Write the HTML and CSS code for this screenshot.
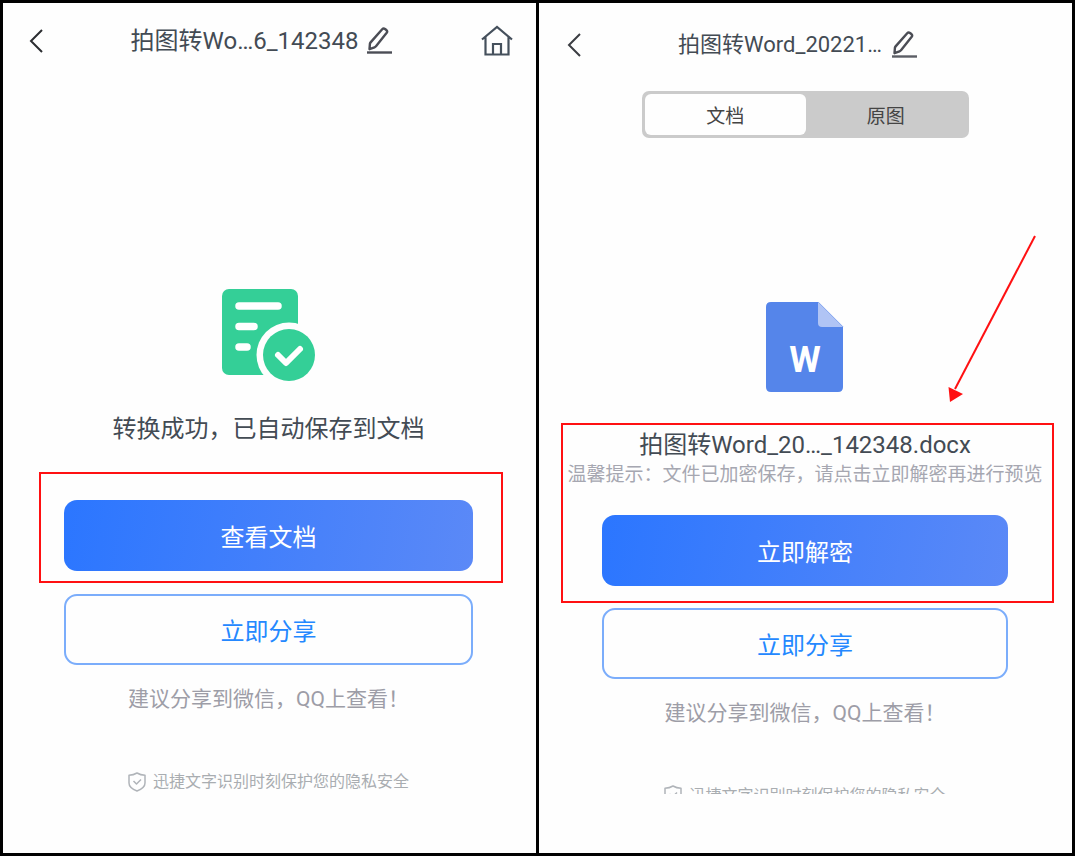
FILE: index.html
```html
<!DOCTYPE html>
<html lang="zh-CN">
<head>
<meta charset="utf-8">
<meta name="viewport" content="width=device-width, initial-scale=1">
<title>拍图转Word</title>
<link rel="stylesheet" href="styles.css">
</head>
<body>
<main class="screens">
  <section class="screen">
    <header class="bar">
      <button class="icon-btn" type="button" aria-label="返回">
        <svg width="14" height="24" viewBox="0 0 14 24"><path d="M13 1 2 12l11 11" fill="none" stroke="#2b2d31" stroke-width="2"/></svg>
      </button>
      <div class="bar-title">
        <h1 class="title">拍图转Wo…6_142348</h1>
        <button class="icon-btn" type="button" aria-label="重命名">
          <svg width="26" height="28" viewBox="0 0 26 28"><path d="M0 25.500h25" stroke="#4b4d55" stroke-width="2.400"/><path d="M15.200 2.300q1.300-1.400 2.800-.3l1.300 1q1.500 1.200.4 2.800L8.800 19.400q-.5.700-1.300 1L2.500 22.200l.4-5.200q.1-.9.700-1.600z" fill="none" stroke="#4b4d55" stroke-width="2.400" stroke-linejoin="round"/></svg>
        </button>
      </div>
      <button class="icon-btn" type="button" aria-label="首页">
        <svg width="32" height="32" viewBox="0 0 32 32" fill="none" stroke="#45505c" stroke-width="2.200"><path d="M1 14.500 16 2 31 14.500M4.500 12V29.500h23V12M12 29.500V19h8v10.500"/></svg>
      </button>
    </header>
    <div class="body body-done">
      <svg class="status-icon" width="94" height="94" viewBox="0 0 94 94" role="img" aria-label="转换成功">
        <rect x="0" y="1" width="76" height="86" rx="7" fill="#34cf97"/>
        <path d="M17 18h39M17 38.500h15M17 59h8" stroke="#fff" stroke-width="7.500" stroke-linecap="round"/>
        <circle cx="67" cy="67" r="32.500" fill="#fefefe"/>
        <circle cx="67" cy="67" r="26" fill="#34cf97"/>
        <path d="m56 67 8 8 14-14" fill="none" stroke="#fff" stroke-width="6" stroke-linecap="round" stroke-linejoin="round"/>
      </svg>
      <p class="message">转换成功，已自动保存到文档</p>
      <div class="mark mark-view">
        <button class="btn btn-primary" type="button">查看文档</button>
      </div>
      <button class="btn btn-outline" type="button">立即分享</button>
      <p class="advice">建议分享到微信，QQ上查看！</p>
      <p class="privacy">
        <svg width="18" height="20" viewBox="0 0 18 20" fill="none" stroke="#b0b4b9" stroke-width="1.500" stroke-linejoin="round"><path d="M9 1Q12.500 3 17 3.300V11q0 5-8 8-8-3-8-8V3.300Q5.500 3 9 1zM5.500 9 8.500 12l4.500-4.500"/></svg>
        <span>迅捷文字识别时刻保护您的隐私安全</span>
      </p>
    </div>
  </section>

  <section class="screen">
    <header class="bar bar-lock">
      <button class="icon-btn" type="button" aria-label="返回">
        <svg width="14" height="24" viewBox="0 0 14 24"><path d="M13 1 2 12l11 11" fill="none" stroke="#3b3d42" stroke-width="2"/></svg>
      </button>
      <div class="bar-title">
        <h1 class="title title-small">拍图转Word_20221…</h1>
        <button class="icon-btn" type="button" aria-label="重命名">
          <svg width="26" height="28" viewBox="0 0 26 28"><path d="M1 25.500h25" stroke="#5b5d65" stroke-width="2.400"/><path d="M16.200 2.300q1.300-1.400 2.800-.3l1.300 1q1.500 1.200.4 2.800L9.800 19.400q-.5.700-1.300 1L3.500 22.200l.4-5.200q.1-.9.700-1.600z" fill="none" stroke="#4b4d55" stroke-width="2.400" stroke-linejoin="round"/></svg>
        </button>
      </div>
    </header>
    <div class="tabs">
      <button class="tab tab-active" type="button" aria-pressed="true">文档</button>
      <button class="tab" type="button" aria-pressed="false">原图</button>
    </div>
    <div class="body body-lock">
      <svg class="status-icon" width="78" height="90" viewBox="0 0 78 90" role="img" aria-label="Word 文档">
        <path d="M5 0h47.500L77 24.500V85q0 5-5 5H5q-5 0-5-5V5q0-5 5-5z" fill="#5585ea"/>
        <path d="M52 0 77 25H56q-4 0-4-4z" fill="#b0c4f5"/>
        <text class="doc-letter" x="39" y="70" text-anchor="middle">W</text>
      </svg>
      <div class="mark mark-unlock">
        <h2 class="file-name">拍图转Word_20…_142348.docx</h2>
        <p class="tip">温馨提示：文件已加密保存，请点击立即解密再进行预览</p>
        <button class="btn btn-primary" type="button">立即解密</button>
      </div>
      <button class="btn btn-outline" type="button">立即分享</button>
      <p class="advice">建议分享到微信，QQ上查看！</p>
      <p class="privacy privacy-cut">
        <svg width="18" height="20" viewBox="0 0 18 20" fill="none" stroke="#b0b4b9" stroke-width="1.500" stroke-linejoin="round"><path d="M9 1Q12.500 3 17 3.300V11q0 5-8 8-8-3-8-8V3.300Q5.500 3 9 1zM5.500 9 8.500 12l4.500-4.500"/></svg>
        <span>迅捷文字识别时刻保护您的隐私安全</span>
      </p>
    </div>
    <svg class="arrow" width="100" height="170" viewBox="0 0 100 170" aria-hidden="true">
      <path d="M93 2 13 155" stroke="#ff1012" stroke-width="2"/>
      <path d="M6.500 153 8 168l13-8z" fill="#ff1012"/>
    </svg>
  </section>
</main>
</body>
</html>
```

FILE: styles.css
```css
* {
  box-sizing: border-box;
}

body {
  margin: 0;
  font-family: Roboto, "Noto Sans CJK SC", sans-serif;
  color: #434b54;
}

h1,
h2,
p {
  margin: 0;
  font-weight: 400;
}

button {
  font: inherit;
  cursor: pointer;
}

.screens {
  display: grid;
  grid-template-columns: 1fr 1fr;
  gap: 3px;
  min-height: 100vh;
  padding: 3px;
  background: #000;
}

.screen {
  position: relative;
  display: flex;
  flex-direction: column;
  min-width: 0;
  background: #fefefe;
}

.bar {
  display: flex;
  align-items: center;
  height: 76px;
  padding: 0 23px 0 26px;
}

.bar-lock {
  height: 84px;
  padding: 0 58px 0 28px;
}

.bar-title {
  display: flex;
  flex: 1;
  align-items: center;
  justify-content: center;
  gap: 9px;
}

.icon-btn {
  display: flex;
  padding: 0;
  border: 0;
  background: none;
}

.title {
  font-size: 24px;
  line-height: 32px;
  white-space: nowrap;
}

.title-small {
  font-size: 22px;
}

.tabs {
  display: grid;
  grid-template-columns: 1fr 1fr;
  width: 327px;
  max-width: 100%;
  height: 47px;
  margin: 4px auto 0;
  padding: 3px;
  border-radius: 7px;
  background: #cbcbcb;
}

.tab {
  border: 0;
  border-radius: 6px;
  background: none;
  color: #444;
  font-size: 19px;
}

.tab-active {
  background: #fefefe;
}

.body {
  display: flex;
  flex-direction: column;
}

.body-done {
  padding: 209px 63px 0 61px;
}

.body-lock {
  padding: 164px 64px 0 63px;
}

.status-icon {
  align-self: center;
}

.doc-letter {
  fill: #fff;
  font-size: 36px;
  font-weight: 700;
}

.message {
  margin-top: 31px;
  font-size: 24px;
  line-height: 32px;
  text-align: center;
}

.mark {
  border: 2px solid #ff1012;
}

.mark-view {
  margin: 27px -30px 11px -25px;
  padding: 26px 28px 10px 23px;
}

.mark-unlock {
  display: flex;
  flex-direction: column;
  margin: 31px -46px 5px -41px;
  padding: 4px 5px 15px 0;
}

.mark-unlock .btn {
  width: auto;
  margin: 26px 39px 0;
}

.file-name {
  font-size: 24px;
  line-height: 32px;
  text-align: center;
}

.tip {
  color: #a6a7b1;
  font-size: 19px;
  line-height: 28px;
  text-align: center;
  white-space: nowrap;
}

.btn {
  width: 100%;
  height: 71px;
  border: 0;
  border-radius: 13px;
  font-size: 24px;
}

.btn-primary {
  background: linear-gradient(100deg, #2b76ff, #5b89f7);
  color: #fff;
}

.btn-outline {
  border: 2px solid #7badfb;
  background: none;
  color: #2488ff;
}

.advice {
  margin-top: 20px;
  color: #9d9da7;
  font-size: 21px;
  line-height: 28px;
  text-align: center;
}

.privacy {
  display: flex;
  align-items: center;
  justify-content: center;
  gap: 7px;
  height: 22px;
  margin-top: 58px;
  color: #a9adb1;
  font-size: 16px;
  line-height: 22px;
}

.privacy-cut {
  align-items: flex-start;
  height: 9px;
  overflow: hidden;
}

.arrow {
  position: absolute;
  top: 231px;
  right: 30px;
}
```
